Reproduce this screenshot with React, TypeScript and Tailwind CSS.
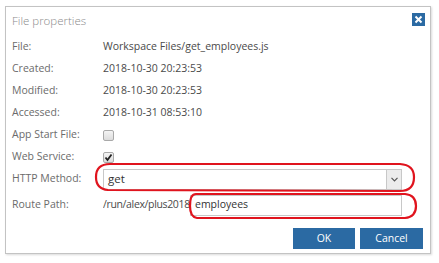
import React from "react";

const Row = ({ label, children }: { label: string; children: React.ReactNode }) => (
  <div className="flex h-[22px] items-center">
    <div className="w-[91px] shrink-0 text-[#6b6b6b]">{label}</div>
    <div className="flex flex-1 items-center text-[#4a4a4a]">{children}</div>
  </div>
);

const Box = ({ checked }: { checked?: boolean }) => (
  <div className="flex h-[11px] w-[11px] items-center justify-center rounded-[2px] border border-[#a9a9a9] bg-gradient-to-b from-[#f4f4f4] to-[#dcdcdc]">
    {checked && (
      <svg width="9" height="9" viewBox="0 0 9 9">
        <path d="M1.5 4.5 L3.5 7 L7.5 1.5" stroke="#222" strokeWidth="1.8" fill="none" />
      </svg>
    )}
  </div>
);

export default function App() {
  return (
    <div
      className="relative h-[263px] w-[439px] overflow-hidden bg-white text-[10.5px]"
      style={{ fontFamily: '"Open Sans", "Noto Sans", sans-serif' }}
    >
      <div className="ml-[5px] mt-[6px] flex h-[248px] w-[426px] flex-col border border-[#c3c3c3] shadow-[1px_1px_2px_rgba(0,0,0,0.15)]">
        <div className="flex h-[29px] items-start justify-between pl-[6px] pr-[5px] pt-[5px]">
          <div className="text-[11.5px] font-light text-[#8a8a8a]">File properties</div>
          <div className="mt-[1px] flex h-[13px] w-[13px] items-center justify-center bg-[#2b6aa3]">
            <svg width="9" height="9" viewBox="0 0 9 9">
              <path d="M1.5 1.5 L7.5 7.5 M7.5 1.5 L1.5 7.5" stroke="white" strokeWidth="2" />
            </svg>
          </div>
        </div>
        <div className="flex flex-col pl-[6px] pr-[28px]">
          <Row label="File:">Workspace Files/get_employees.js</Row>
          <Row label="Created:">2018-10-30 20:23:53</Row>
          <Row label="Modified:">2018-10-30 20:23:53</Row>
          <Row label="Accessed:">2018-10-31 08:53:10</Row>
          <Row label="App Start File:">
            <Box />
          </Row>
          <Row label="Web Service:">
            <Box checked />
          </Row>
          <Row label="HTTP Method:">
            <div className="flex h-[21px] flex-1 items-center border border-[#c8c8c8] bg-white">
              <div className="flex-1 pl-[4px] text-[11.5px] text-[#333]">get</div>
              <div className="flex h-full w-[15px] items-center justify-center border-l border-[#c8c8c8] bg-[#ececec]">
                <svg width="7" height="5" viewBox="0 0 7 5">
                  <path d="M0.5 0.8 L3.5 3.8 L6.5 0.8" stroke="#555" strokeWidth="1.2" fill="none" />
                </svg>
              </div>
            </div>
          </Row>
          <div className="mt-[4px] flex h-[22px] items-center">
            <div className="w-[91px] shrink-0 text-[#6b6b6b]">Route Path:</div>
            <div className="flex flex-1 items-center text-[#4a4a4a]">
              <span className="w-[87px] shrink-0 overflow-hidden whitespace-nowrap tracking-[-0.35px]">/run/alex/plus2018/</span>
              <div className="flex h-[21px] flex-1 items-center border border-[#c8c8c8] bg-white pl-[4px] text-[#333]">
                employees
              </div>
            </div>
          </div>
        </div>
        <div className="mt-[12px] flex justify-end gap-[5px] pr-[7px]">
          <div className="flex h-[21px] w-[62px] items-center justify-center bg-[#2b6aa3] text-white">OK</div>
          <div className="flex h-[21px] w-[63px] items-center justify-center bg-[#2b6aa3] text-white">Cancel</div>
        </div>
      </div>
      <svg className="pointer-events-none absolute left-0 top-0" width="439" height="263">
        <path
          d="M110 164 L400 164 Q414 165 414 177 Q414 191 400 191 L108 190 Q96 189 96 177 Q96 164 110 164 Z"
          stroke="#e0141e"
          strokeWidth="2.2"
          fill="none"
        />
        <path
          d="M196 194 L405 194 Q416 195 416 206 Q416 217 405 218 L197 218 Q190 217 190 206 Q190 194 196 194 Z"
          stroke="#e0141e"
          strokeWidth="2.2"
          fill="none"
        />
      </svg>
    </div>
  );
}
